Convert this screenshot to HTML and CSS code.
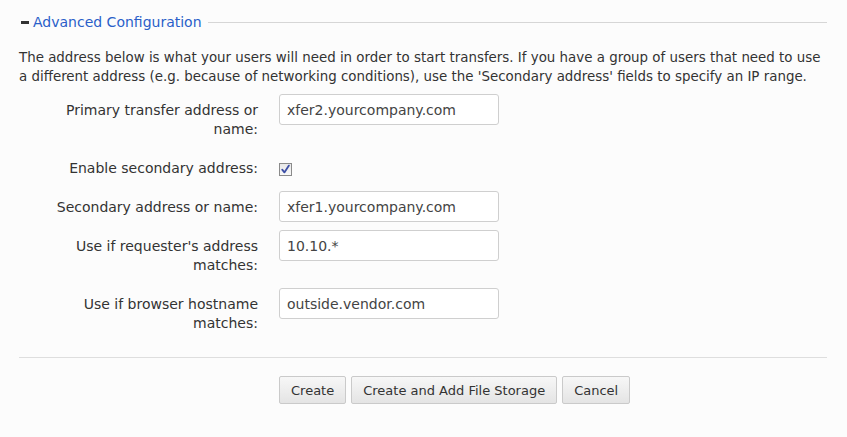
FILE: index.html
```html
<!DOCTYPE html>
<html>
<head>
<meta charset="utf-8">
<link rel="stylesheet" href="styles.css">
</head>
<body>
<div class="panel">
  <div class="legend">
    <span class="minus"></span>
    <a class="legend-link" href="#">Advanced Configuration</a>
    <span class="legend-line"></span>
  </div>
  <p class="intro">The address below is what your users will need in order to start transfers. If you have a group of users that need to use a different address (e.g. because of networking conditions), use the 'Secondary address' fields to specify an IP range.</p>
  <div class="form">
    <div class="row">
      <label class="lbl">Primary transfer address or name:</label>
      <div class="field"><input class="txt" type="text" value="xfer2.yourcompany.com"></div>
    </div>
    <div class="row">
      <label class="lbl">Enable secondary address:</label>
      <div class="field"><span class="check"><svg width="11" height="11" viewBox="0 0 11 11"><path d="M2.2 5.6 L4.4 8.4 L8.9 1.6" fill="none" stroke="#3d4fa6" stroke-width="1.8" stroke-linecap="round" stroke-linejoin="round"/></svg></span></div>
    </div>
    <div class="row">
      <label class="lbl">Secondary address or name:</label>
      <div class="field"><input class="txt" type="text" value="xfer1.yourcompany.com"></div>
    </div>
    <div class="row">
      <label class="lbl">Use if requester's address matches:</label>
      <div class="field"><input class="txt" type="text" value="10.10.*"></div>
    </div>
    <div class="row">
      <label class="lbl">Use if browser hostname matches:</label>
      <div class="field"><input class="txt" type="text" value="outside.vendor.com"></div>
    </div>
  </div>
  <div class="divider"></div>
  <div class="actions">
    <button class="btn">Create</button>
    <button class="btn">Create and Add File Storage</button>
    <button class="btn">Cancel</button>
  </div>
</div>
</body>
</html>
```
FILE: styles.css
```css
html, body {
  margin: 0;
  padding: 0;
  background: #fcfcfc;
}
body {
  font-family: "DejaVu Sans", Verdana, sans-serif;
  font-size: 13px;
  color: #333;
}
.panel {
  padding: 12px 20px 0 19px;
}
.legend {
  display: flex;
  align-items: center;
  height: 20px;
}
.minus {
  width: 8px;
  height: 3px;
  background: #333;
  margin-left: 2px;
  margin-right: 4px;
}
.legend-link {
  color: #2a5fc9;
  text-decoration: none;
  font-size: 14px;
}
.legend-line {
  flex: 1;
  height: 1px;
  background: #d6d6d6;
  margin-left: 6px;
}
.intro {
  margin: 16px 0 8px 0;
  line-height: 19px;
  font-size: 13.4px;
}
.form {
  display: flex;
  flex-direction: column;
  gap: 8px;
}
.row {
  display: grid;
  grid-template-columns: 206px 220px;
  column-gap: 21px;
  padding-left: 33px;
  align-items: start;
}
.lbl {
  text-align: right;
  line-height: 19px;
  padding: 7px 0 5px 0;
  font-size: 14px;
}
.field {
  display: flex;
  align-items: center;
  min-height: 31px;
}
.txt {
  box-sizing: border-box;
  width: 220px;
  height: 31px;
  border: 1px solid #cfcfcf;
  border-radius: 3px;
  background: #fff;
  padding: 0 7px;
  font-family: "DejaVu Sans", Verdana, sans-serif;
  font-size: 14px;
  color: #444;
  outline: none;
}
.check {
  box-sizing: border-box;
  width: 13px;
  height: 13px;
  margin-top: 3px;
  border: 1px solid #8a8a8a;
  background: linear-gradient(#e8e8e8, #f8f8f8);
  display: flex;
  align-items: center;
  justify-content: center;
}
.divider {
  height: 1px;
  background: #dedede;
  margin-top: 19px;
}
.actions {
  display: flex;
  gap: 5px;
  padding-left: 260px;
  margin-top: 18px;
}
.btn {
  height: 28px;
  border: 1px solid #cacaca;
  border-radius: 2px;
  background: linear-gradient(#f7f7f7, #e4e4e4);
  font-family: "DejaVu Sans", Verdana, sans-serif;
  font-size: 13px;
  color: #333;
  padding: 0 11px;
}
```
